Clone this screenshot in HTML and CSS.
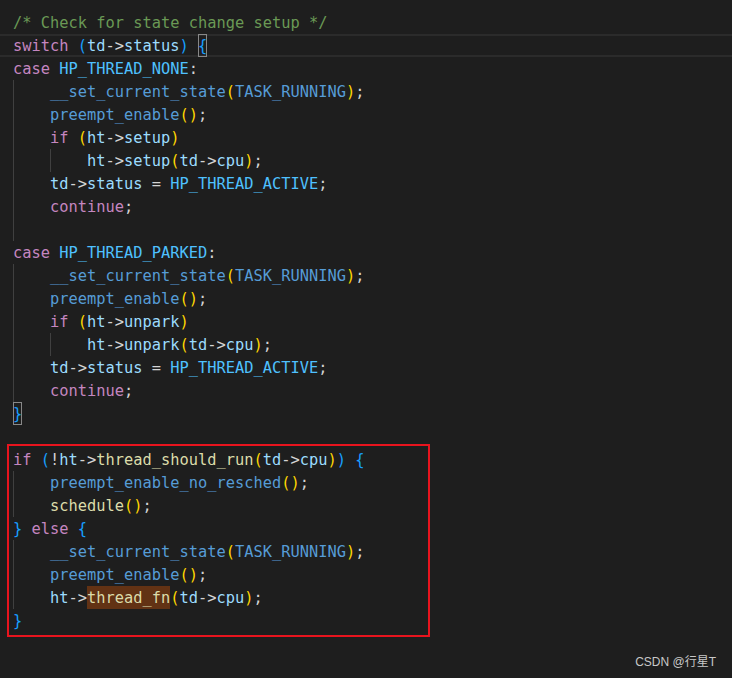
FILE: index.html
```html
<!DOCTYPE html>
<html lang="en">
<head>
<meta charset="utf-8">
<title>Code</title>
<link rel="stylesheet" href="styles.css">
</head>
<body>
<div class="editor">
<div class="ln"><span class="cm">/* Check for state change setup */</span></div>
<div class="ln cur"><span class="kw">switch</span> <span class="b3">(</span><span class="v">td</span>-&gt;<span class="v">status</span><span class="b3">)</span> <span class="b3 bm">{</span></div>
<div class="ln"><span class="kw">case</span> <span class="en">HP_THREAD_NONE</span>:</div>
<div class="ln"><span class="ig"></span><span class="mc">__set_current_state</span><span class="b1">(</span><span class="mc">TASK_RUNNING</span><span class="b1">)</span>;</div>
<div class="ln"><span class="ig"></span><span class="mc">preempt_enable</span><span class="b1">()</span>;</div>
<div class="ln"><span class="ig"></span><span class="kw">if</span> <span class="b1">(</span><span class="v">ht</span>-&gt;<span class="v">setup</span><span class="b1">)</span></div>
<div class="ln"><span class="ig"></span><span class="ig"></span><span class="v">ht</span>-&gt;<span class="v">setup</span><span class="b1">(</span><span class="v">td</span>-&gt;<span class="v">cpu</span><span class="b1">)</span>;</div>
<div class="ln"><span class="ig"></span><span class="v">td</span>-&gt;<span class="v">status</span> = <span class="en">HP_THREAD_ACTIVE</span>;</div>
<div class="ln"><span class="ig"></span><span class="kw">continue</span>;</div>
<div class="ln"><span class="ig"></span></div>
<div class="ln"><span class="kw">case</span> <span class="en">HP_THREAD_PARKED</span>:</div>
<div class="ln"><span class="ig"></span><span class="mc">__set_current_state</span><span class="b1">(</span><span class="mc">TASK_RUNNING</span><span class="b1">)</span>;</div>
<div class="ln"><span class="ig"></span><span class="mc">preempt_enable</span><span class="b1">()</span>;</div>
<div class="ln"><span class="ig"></span><span class="kw">if</span> <span class="b1">(</span><span class="v">ht</span>-&gt;<span class="v">unpark</span><span class="b1">)</span></div>
<div class="ln"><span class="ig"></span><span class="ig"></span><span class="v">ht</span>-&gt;<span class="v">unpark</span><span class="b1">(</span><span class="v">td</span>-&gt;<span class="v">cpu</span><span class="b1">)</span>;</div>
<div class="ln"><span class="ig"></span><span class="v">td</span>-&gt;<span class="v">status</span> = <span class="en">HP_THREAD_ACTIVE</span>;</div>
<div class="ln"><span class="ig"></span><span class="kw">continue</span>;</div>
<div class="ln"><span class="b3 bm">}</span></div>
<div class="ln"></div>
<div class="mark">
<div class="ln in"><span class="kw">if</span> <span class="b3">(</span>!<span class="v">ht</span>-&gt;<span class="fn">thread_should_run</span><span class="b1">(</span><span class="v">td</span>-&gt;<span class="v">cpu</span><span class="b1">)</span><span class="b3">)</span> <span class="b3">{</span></div>
<div class="ln in"><span class="ig"></span><span class="mc">preempt_enable_no_resched</span><span class="b1">()</span>;</div>
<div class="ln in"><span class="ig"></span><span class="fn">schedule</span><span class="b1">()</span>;</div>
<div class="ln in"><span class="b3">}</span> <span class="kw">else</span> <span class="b3">{</span></div>
<div class="ln in"><span class="ig"></span><span class="mc">__set_current_state</span><span class="b1">(</span><span class="mc">TASK_RUNNING</span><span class="b1">)</span>;</div>
<div class="ln in"><span class="ig"></span><span class="mc">preempt_enable</span><span class="b1">()</span>;</div>
<div class="ln in"><span class="ig"></span><span class="v">ht</span>-&gt;<span class="fn find">thread_fn</span><span class="b1">(</span><span class="v">td</span>-&gt;<span class="v">cpu</span><span class="b1">)</span>;</div>
<div class="ln in"><span class="b3">}</span></div>
</div>
<div class="wm">CSDN @行星T</div>
</div>
</body>
</html>
```
FILE: styles.css
```css
html, body {
  margin: 0;
  padding: 0;
  background: #1e1e1e;
  height: 100%;
}

.editor {
  padding-top: 11px;
  font-family: "DejaVu Sans Mono", "Liberation Mono", monospace;
  font-size: 15.37px;
  color: #d4d4d4;
}

.ln {
  height: 23px;
  line-height: 25px;
  padding-left: 13px;
  white-space: pre;
}

.ln.in {
  padding-left: 0;
}

.cur {
  box-shadow: inset 0 2px #2b2b2b, inset 0 -2px #2b2b2b;
}

.ig {
  display: inline-block;
  width: 4ch;
  height: 23px;
  vertical-align: top;
  box-shadow: inset 1px 0 #404040;
}

.mark {
  margin: -4px 0 0 7px;
  width: 423px;
  box-sizing: border-box;
  border: 2px solid #e8141e;
  padding: 2px 0 3px 4px;
}

.cm { color: #6a9955; }
.kw { color: #c586c0; }
.v { color: #9cdcfe; }
.en { color: #4fc1ff; }
.mc { color: #569cd6; }
.fn { color: #dcdcaa; }
.b1 { color: #ffd700; }
.b3 { color: #179fff; }

.bm {
  display: inline-block;
  height: 23px;
  vertical-align: top;
  box-shadow: inset 0 0 0 1px #888888;
}

.find {
  display: inline-block;
  height: 23px;
  vertical-align: top;
  background: #623214;
}

.wm {
  margin-top: 17px;
  padding-right: 16px;
  text-align: right;
  font-family: "Liberation Sans", "Noto Sans CJK SC", sans-serif;
  font-size: 12px;
  line-height: 16px;
  color: #c8c8c8;
}
```
